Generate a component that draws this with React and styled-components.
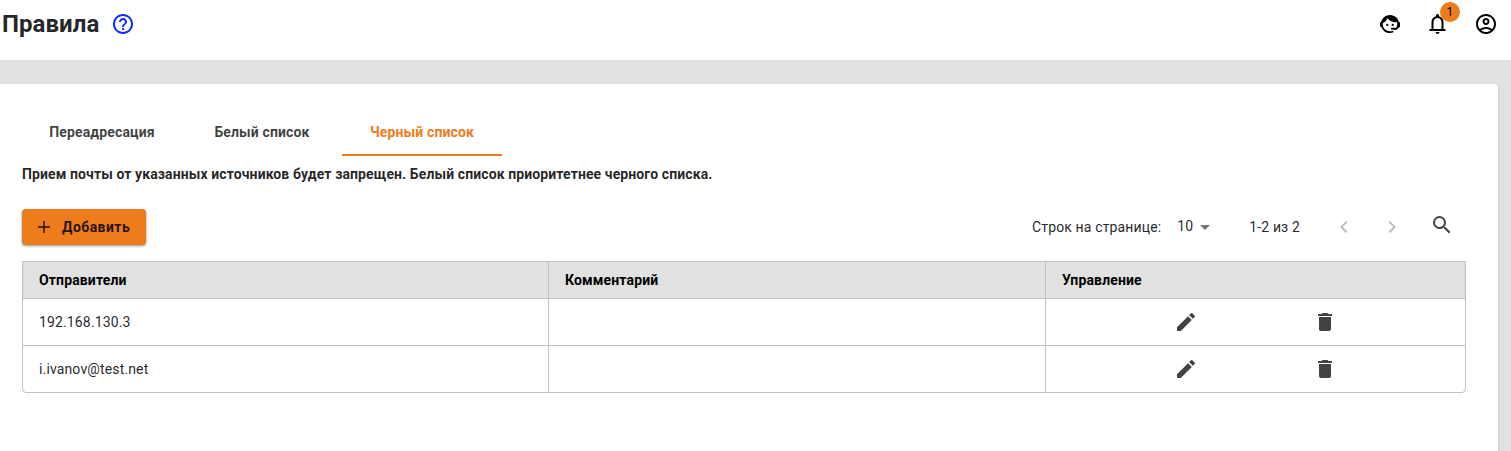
import React from "react";
import styled, { createGlobalStyle, css } from "styled-components";
import {
  MdHelpOutline,
  MdOutlineAccountCircle,
  MdSearch,
  MdEdit,
  MdDelete,
  MdChevronLeft,
  MdChevronRight,
} from "react-icons/md";

const GlobalStyle = createGlobalStyle`
  * { box-sizing: border-box; }
  body {
    margin: 0;
    overflow: hidden;
    background: #e1e1e1;
    color: rgba(0, 0, 0, 0.87);
    font: 400 14px/20px Roboto, "Liberation Sans", sans-serif;
    letter-spacing: 0.14px;
  }
  svg { display: block; flex: none; }
`;

const Page = styled.div`
  display: flex;
  flex-direction: column;
  height: 451px;
  overflow: hidden;
`;

const Header = styled.header`
  display: flex;
  align-items: flex-start;
  justify-content: space-between;
  flex: none;
  height: 60px;
  padding: 8px 13px 0 2px;
  background: #fff;
`;

const TitleGroup = styled.div`
  display: flex;
  align-items: center;
  gap: 12px;
  height: 32px;
`;

const Title = styled.h1`
  margin: 0;
  font-size: 24px;
  line-height: 32px;
  font-weight: 700;
  letter-spacing: 0.05px;
`;

const HeaderActions = styled.div`
  display: flex;
  align-items: center;
  gap: 24px;
  height: 32px;
  color: #000;
`;

const BellHolder = styled.div`
  position: relative;
`;

const Badge = styled.span`
  position: absolute;
  left: 14px;
  top: -10px;
  width: 20px;
  height: 20px;
  border-radius: 50%;
  background: #ed7d1c;
  font-size: 12px;
  line-height: 20px;
  text-align: center;
`;

const Card = styled.main`
  flex: 1;
  margin: 24px 13px -10px -2px;
  padding: 24px 32px 0 24px;
  border-radius: 4px;
  background: #fff;
  box-shadow: 0 1px 2px rgba(0, 0, 0, 0.2);
`;

const Tabs = styled.nav`
  display: flex;
  height: 48px;
`;

const Tab = styled.a`
  width: 160px;
  border-bottom: 2px solid transparent;
  color: rgba(0, 0, 0, 0.75);
  font-weight: 700;
  line-height: 48px;
  text-align: center;
  ${(p) =>
    p.$active &&
    css`
      color: #ed7d1c;
      border-color: #ed7d1c;
    `}
`;

const Note = styled.p`
  margin: 8px 0 0;
  font-weight: 700;
  letter-spacing: 0.105px;
`;

const Toolbar = styled.div`
  display: flex;
  align-items: center;
  justify-content: space-between;
  height: 36px;
  margin: 25px 0 16px;
`;

const AddButton = styled.button`
  display: flex;
  align-items: center;
  gap: 9px;
  width: 124px;
  height: 36px;
  padding: 0 0 0 13px;
  border: 0;
  border-radius: 4px;
  background: #ed7d1c;
  color: rgba(0, 0, 0, 0.87);
  font: inherit;
  font-weight: 700;
  letter-spacing: 0.45px;
  box-shadow: 0 1px 3px rgba(0, 0, 0, 0.3), 0 1px 2px rgba(0, 0, 0, 0.16);
`;

const Paginator = styled.div`
  display: flex;
  align-items: center;
  padding-right: 12px;
`;

const PageSize = styled.div`
  display: flex;
  align-items: center;
  gap: 7px;
  margin: 0 39px 0 16px;
  padding-bottom: 2px;
`;

const Arrow = styled.i`
  margin-top: 3px;
  border: 5px solid transparent;
  border-top-color: rgba(0, 0, 0, 0.54);
  border-bottom: 0;
`;

const PageButtons = styled.div`
  display: flex;
  gap: 24px;
  margin: 0 26px 0 32px;
  color: rgba(0, 0, 0, 0.26);
`;

const SearchButton = styled.div`
  padding-bottom: 4px;
  color: #424242;
`;

const Table = styled.div`
  border: 1px solid #c1c1c1;
  border-radius: 0 0 4px 4px;
  overflow: hidden;
`;

const Row = styled.div`
  display: grid;
  grid-template-columns: 525px 497px 1fr;
  height: ${(p) => (p.$head ? 36 : 47)}px;
  ${(p) =>
    p.$head
      ? css`
          background: #e1e1e1;
          color: #000;
          font-weight: 700;
        `
      : css`
          border-top: 1px solid #c1c1c1;
        `}
`;

const Cell = styled.div`
  display: flex;
  align-items: center;
  padding: 0 16px;
  & + & {
    border-left: 1px solid #c1c1c1;
  }
`;

const ActionsCell = styled(Cell)`
  padding: 0 70px;
  color: #424242;
  svg {
    margin: 0 auto;
  }
`;

const AgentIcon = () => (
  <svg width="24" height="24" viewBox="0 0 24 24" fill="currentColor">
    <path d="M18.72 14.76C19.07 13.91 19.26 13 19.26 12C19.26 11.28 19.15 10.59 18.96 9.95C18.31 10.1 17.63 10.18 16.92 10.18C13.86 10.18 11.15 8.67 9.5 6.34C8.61 8.5 6.91 10.26 4.77 11.22C4.73 11.47 4.73 11.74 4.73 12A7.27 7.27 0 0 0 12 19.27C13.05 19.27 14.06 19.04 14.97 18.63C15.54 19.72 15.8 20.26 15.78 20.26C14.14 20.81 12.87 21.08 12 21.08C9.58 21.08 7.27 20.13 5.57 18.42C4.53 17.38 3.76 16.11 3.33 14.73H2V10.18H3.09C3.93 6.04 7.6 2.92 12 2.92C14.4 2.92 16.71 3.87 18.42 5.58C19.69 6.84 20.54 8.45 20.89 10.18H22V14.73H21.94L18.38 18L13.08 17.4V15.73H17.91L18.72 14.76Z" />
    <circle cx="9.27" cy="12.91" r="1.14" />
    <circle cx="14.72" cy="12.91" r="1.14" />
  </svg>
);

const BellIcon = () => (
  <svg width="24" height="24" viewBox="0.5 0 24 24" fill="currentColor">
    <path d="M4 19v-2h2v-7c0-1.38.42-2.61 1.25-3.69S9.17 4.53 10.5 4.2v-.7c0-.42.15-.77.44-1.06S11.58 2 12 2s.77.15 1.06.44.44.64.44 1.06v.7c1.33.33 2.42 1.03 3.25 2.11S18 8.62 18 10v7h2v2H4zm8 3a2 2 0 0 1-2-2h4a2 2 0 0 1-2 2zM8 17h8v-7c0-1.1-.39-2.04-1.18-2.82S13.1 6 12 6s-2.04.39-2.82 1.18S8 8.9 8 10v7z" />
  </svg>
);

const PlusIcon = () => (
  <svg width="18" height="18" viewBox="0 0 18 18" stroke="currentColor" strokeWidth="1.4">
    <path d="M3 9h12M9 3v12" />
  </svg>
);

const tabs = ["Переадресация", "Белый список", "Черный список"];
const senders = ["192.168.130.3", "i.ivanov@test.net"];

export default function App() {
  return (
    <>
      <GlobalStyle />
      <Page>
        <Header>
          <TitleGroup>
            <Title>Правила</Title>
            <MdHelpOutline size={24} color="#0a2cff" />
          </TitleGroup>
          <HeaderActions>
            <AgentIcon />
            <BellHolder>
              <BellIcon />
              <Badge>1</Badge>
            </BellHolder>
            <MdOutlineAccountCircle size={24} />
          </HeaderActions>
        </Header>
        <Card>
          <Tabs>
            {tabs.map((label, i) => (
              <Tab key={label} $active={i === 2}>
                {label}
              </Tab>
            ))}
          </Tabs>
          <Note>
            Прием почты от указанных источников будет запрещен. Белый список
            приоритетнее черного списка.
          </Note>
          <Toolbar>
            <AddButton>
              <PlusIcon />
              Добавить
            </AddButton>
            <Paginator>
              <span>Строк на странице:</span>
              <PageSize>
                10
                <Arrow />
              </PageSize>
              <span>1-2 из 2</span>
              <PageButtons>
                <MdChevronLeft size={24} />
                <MdChevronRight size={24} />
              </PageButtons>
              <SearchButton>
                <MdSearch size={24} />
              </SearchButton>
            </Paginator>
          </Toolbar>
          <Table>
            <Row $head>
              <Cell>Отправители</Cell>
              <Cell>Комментарий</Cell>
              <Cell>Управление</Cell>
            </Row>
            {senders.map((sender) => (
              <Row key={sender}>
                <Cell>{sender}</Cell>
                <Cell />
                <ActionsCell>
                  <MdEdit size={24} />
                  <MdDelete size={24} />
                </ActionsCell>
              </Row>
            ))}
          </Table>
        </Card>
      </Page>
    </>
  );
}
